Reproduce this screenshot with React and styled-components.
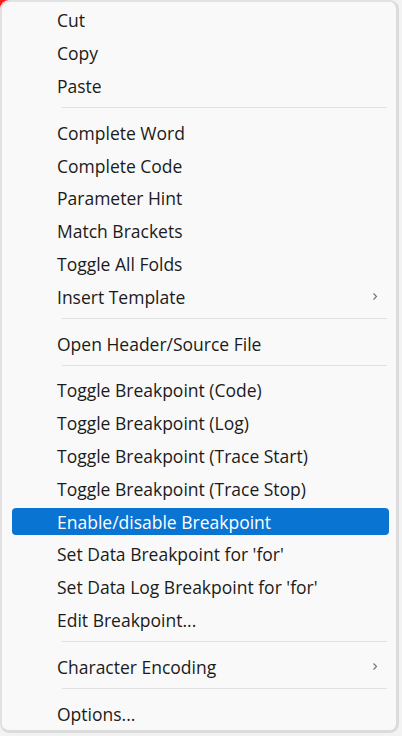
import React from 'react';
import styled, { createGlobalStyle } from 'styled-components';

const GlobalStyle = createGlobalStyle`
  html, body {
    margin: 0;
    padding: 0;
    background: #f3f3f3;
  }
  body {
    font-family: "Open Sans", "Noto Sans", sans-serif;
  }
`;

const Screen = styled.div`
  position: relative;
  width: 402px;
  height: 736px;
  overflow: hidden;
  background: #f3f3f3;

  &::before {
    content: '';
    position: absolute;
    left: 0;
    top: 0;
    width: 14px;
    height: 14px;
    background: #ff1a1a;
  }
`;

const Menu = styled.div`
  position: relative;
  box-sizing: border-box;
  width: 399px;
  height: 733px;
  background: #f9f9f9;
  border: 2px solid #e2e2e2;
  border-right: 3px solid #dcdcdc;
  border-bottom: 3px solid #dcdcdc;
  border-radius: 9px;
  padding: 2px 0 0;
  display: flex;
  flex-direction: column;
`;

const Row = styled.div`
  height: 33px;
  padding: 3px 7px 3px 10px;
  box-sizing: border-box;
  display: flex;
`;

const Item = styled.div`
  flex: 1;
  display: flex;
  align-items: center;
  justify-content: space-between;
  padding: 0 11px 0 45px;
  border-radius: 4px;
  font-size: 17.5px;
  color: ${p => (p.$active ? '#ffffff' : '#1b1b1b')};
  background: ${p => (p.$active ? '#0a74d2' : 'transparent')};
  white-space: nowrap;
`;

const Chevron = styled.svg`
  width: 6px;
  height: 9px;
  flex: none;
`;

const Separator = styled.div`
  height: 1px;
  margin: 5px 9px 8px 60px;
  background: #e1e1e1;
`;

const groups = [
  [{ label: 'Cut' }, { label: 'Copy' }, { label: 'Paste' }],
  [
    { label: 'Complete Word' },
    { label: 'Complete Code' },
    { label: 'Parameter Hint' },
    { label: 'Match Brackets' },
    { label: 'Toggle All Folds' },
    { label: 'Insert Template', sub: true },
  ],
  [{ label: 'Open Header/Source File' }],
  [
    { label: 'Toggle Breakpoint (Code)' },
    { label: 'Toggle Breakpoint (Log)' },
    { label: 'Toggle Breakpoint (Trace Start)' },
    { label: 'Toggle Breakpoint (Trace Stop)' },
    { label: 'Enable/disable Breakpoint', active: true },
    { label: "Set Data Breakpoint for 'for'" },
    { label: "Set Data Log Breakpoint for 'for'" },
    { label: 'Edit Breakpoint...' },
  ],
  [{ label: 'Character Encoding', sub: true }],
  [{ label: 'Options...' }],
];

const MenuItem = ({ label, sub, active }) => (
  <Row>
    <Item $active={active}>
      <span>{label}</span>
      {sub && (
        <Chevron viewBox="0 0 6 9">
          <path d="M1.5 1.5 L4.5 4.5 L1.5 7.5" fill="none" stroke="#707070" strokeWidth="1.1" />
        </Chevron>
      )}
    </Item>
  </Row>
);

const App = () => (
  <Screen>
    <GlobalStyle />
    <Menu>
      {groups.map((group, i) => (
        <React.Fragment key={i}>
          {i > 0 && <Separator />}
          {group.map(item => (
            <MenuItem key={item.label} {...item} />
          ))}
        </React.Fragment>
      ))}
    </Menu>
  </Screen>
);

export default App;
